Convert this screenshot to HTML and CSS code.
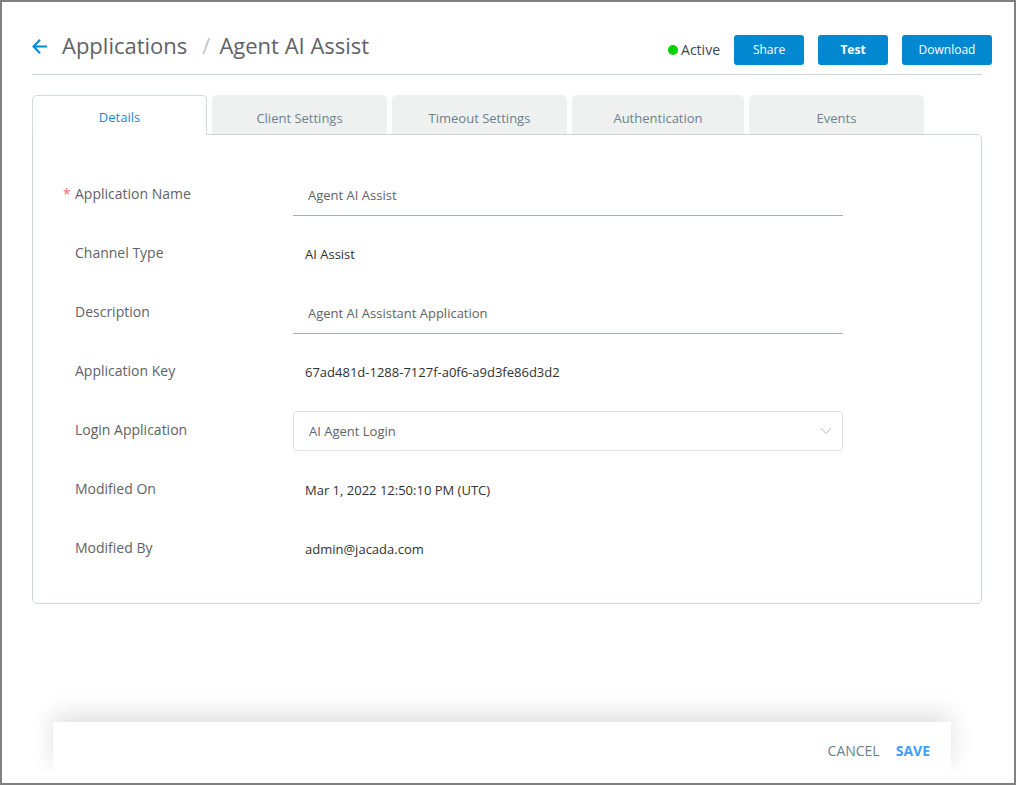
FILE: index.html
```html
<!DOCTYPE html>
<html lang="en">
<head>
<meta charset="utf-8">
<title>Agent AI Assist</title>
<link rel="stylesheet" href="styles.css">
</head>
<body>
<div class="frame">
  <header class="header">
    <a class="back" href="#" aria-label="Back">
      <svg width="16" height="16" viewBox="0 0 16 16" fill="none" stroke="currentColor" stroke-width="2"><path d="M15 8.500H2M8 1.800L1.500 8.500L8 15.200"/></svg>
    </a>
    <h1 class="crumbs"><a class="crumb" href="#">Applications</a><span class="slash">/</span><span>Agent AI Assist</span></h1>
    <div class="actions">
      <span class="status"><span class="dot"></span>Active</span>
      <button class="btn" type="button">Share</button>
      <button class="btn btn-strong" type="button">Test</button>
      <button class="btn btn-wide" type="button">Download</button>
    </div>
  </header>
  <nav class="tabs" role="tablist">
    <button class="tab tab-active" type="button" role="tab" aria-selected="true">Details</button>
    <button class="tab" type="button" role="tab">Client Settings</button>
    <button class="tab" type="button" role="tab">Timeout Settings</button>
    <button class="tab tab-narrow" type="button" role="tab">Authentication</button>
    <button class="tab" type="button" role="tab">Events</button>
  </nav>
  <form class="panel" id="details">
    <div class="row">
      <label class="label label-required" for="name"><span class="star">*</span>Application Name</label>
      <input class="input" id="name" type="text" value="Agent AI Assist" required>
    </div>
    <div class="row">
      <span class="label">Channel Type</span>
      <span class="value">AI Assist</span>
    </div>
    <div class="row">
      <label class="label" for="description">Description</label>
      <input class="input" id="description" type="text" value="Agent AI Assistant Application">
    </div>
    <div class="row">
      <span class="label">Application Key</span>
      <span class="value">67ad481d-1288-7127f-a0f6-a9d3fe86d3d2</span>
    </div>
    <div class="row">
      <label class="label" for="login">Login Application</label>
      <div class="select-box">
        <select class="select" id="login"><option>AI Agent Login</option></select>
        <svg class="chevron" width="12" height="8" viewBox="0 0 12 8" fill="none" stroke="currentColor"><path d="M1 1L6 6.500L11 1"/></svg>
      </div>
    </div>
    <div class="row">
      <span class="label">Modified On</span>
      <span class="value">Mar 1, 2022 12:50:10 PM (UTC)</span>
    </div>
    <div class="row">
      <span class="label">Modified By</span>
      <span class="value">admin@jacada.com</span>
    </div>
  </form>
  <footer class="footer">
    <div class="footer-bar">
      <button class="link" type="button">CANCEL</button>
      <button class="link link-save" type="submit" form="details">SAVE</button>
    </div>
  </footer>
</div>
</body>
</html>
```

FILE: styles.css
```css
* { box-sizing: border-box; }

body {
  margin: 0;
  background: #fff;
  color: #606266;
  font-family: "Open Sans", "Noto Sans", sans-serif;
  font-size: 13px;
}

button, input, select { font: inherit; color: inherit; }
button { cursor: pointer; }

.frame {
  display: flex;
  flex-direction: column;
  min-height: 100vh;
  padding: 0 32px 11px 30px;
  border: 2px solid #808080;
}

.header {
  display: flex;
  align-items: center;
  height: 73px;
  padding-top: 15px;
  border-bottom: 1px solid #cfd4d4;
}

.back {
  display: flex;
  color: #0288d1;
}

.crumbs {
  margin: 0 0 2px 14px;
  font-size: 22px;
  font-weight: 400;
  line-height: 30px;
  white-space: nowrap;
}

.crumb { color: inherit; text-decoration: none; }
.slash { margin: 0 9px 0 15px; color: #c0c4cc; }

.actions {
  display: flex;
  align-items: center;
  gap: 14px;
  margin: 8px -10px 0 auto;
}

.status {
  display: flex;
  align-items: center;
  gap: 3px;
  font-size: 14px;
  font-weight: 500;
  color: #3d4852;
}

.dot {
  width: 10px;
  height: 10px;
  border-radius: 50%;
  background: #00d200;
}

.btn {
  width: 70px;
  height: 30px;
  padding: 0;
  border: 0;
  border-radius: 3px;
  background: #0288d1;
  color: #fff;
  font-size: 12px;
}

.btn-strong { font-weight: 700; }
.btn-wide { width: 90px; }

.tabs {
  display: flex;
  gap: 5px;
  margin-top: 20px;
}

.tab {
  flex: 0 1 175px;
  height: 39px;
  padding: 7px 0 0;
  border: 0;
  border-radius: 5px 5px 0 0;
  background: #eff1f1;
  color: #6b818d;
}

.tab-narrow { flex-basis: 172px; }

.tab-active {
  z-index: 1;
  height: 40px;
  margin-bottom: -1px;
  padding-top: 2px;
  border: 1px solid #d3d8dc;
  border-bottom: 0;
  background: #fff;
  color: #1a86d0;
}

.panel {
  padding: 40px 30px 15px;
  border: 1px solid #cfd6d6;
  border-radius: 0 5px 5px 5px;
}

.row {
  display: grid;
  grid-template-columns: 230px minmax(0, 550px);
  align-items: start;
  height: 59px;
}

.label {
  padding-left: 12px;
  font-size: 14px;
  line-height: 38px;
}

.label-required { padding-left: 0; }

.star {
  display: inline-block;
  width: 12px;
  color: #f56c6c;
}

.value {
  padding-left: 12px;
  line-height: 40px;
  color: #303133;
}

.input {
  width: 100%;
  height: 41px;
  padding: 0 15px;
  border: 0;
  border-bottom: 1px solid #a3afaf;
  background: transparent;
}

.select-box { position: relative; }

.select {
  display: block;
  width: 100%;
  height: 40px;
  padding: 0 15px;
  border: 1px solid #dcdfe6;
  border-radius: 4px;
  background: #fff;
  appearance: none;
}

.chevron {
  position: absolute;
  top: 16px;
  right: 11px;
  color: #b4bccc;
  pointer-events: none;
}

.footer {
  margin: auto 0 0;
  padding: 40px 31px 0 21px;
  overflow: hidden;
}

.footer-bar {
  display: flex;
  align-items: center;
  justify-content: flex-end;
  gap: 16px;
  height: 50px;
  padding: 6px 21px 0;
  background: #fff;
  box-shadow: 0 -8px 24px rgba(0, 0, 0, 0.13);
}

.link {
  padding: 0;
  border: 0;
  background: none;
  color: #6b818d;
  font-size: 14px;
}

.link-save {
  color: #409eff;
  font-weight: 700;
}
```
